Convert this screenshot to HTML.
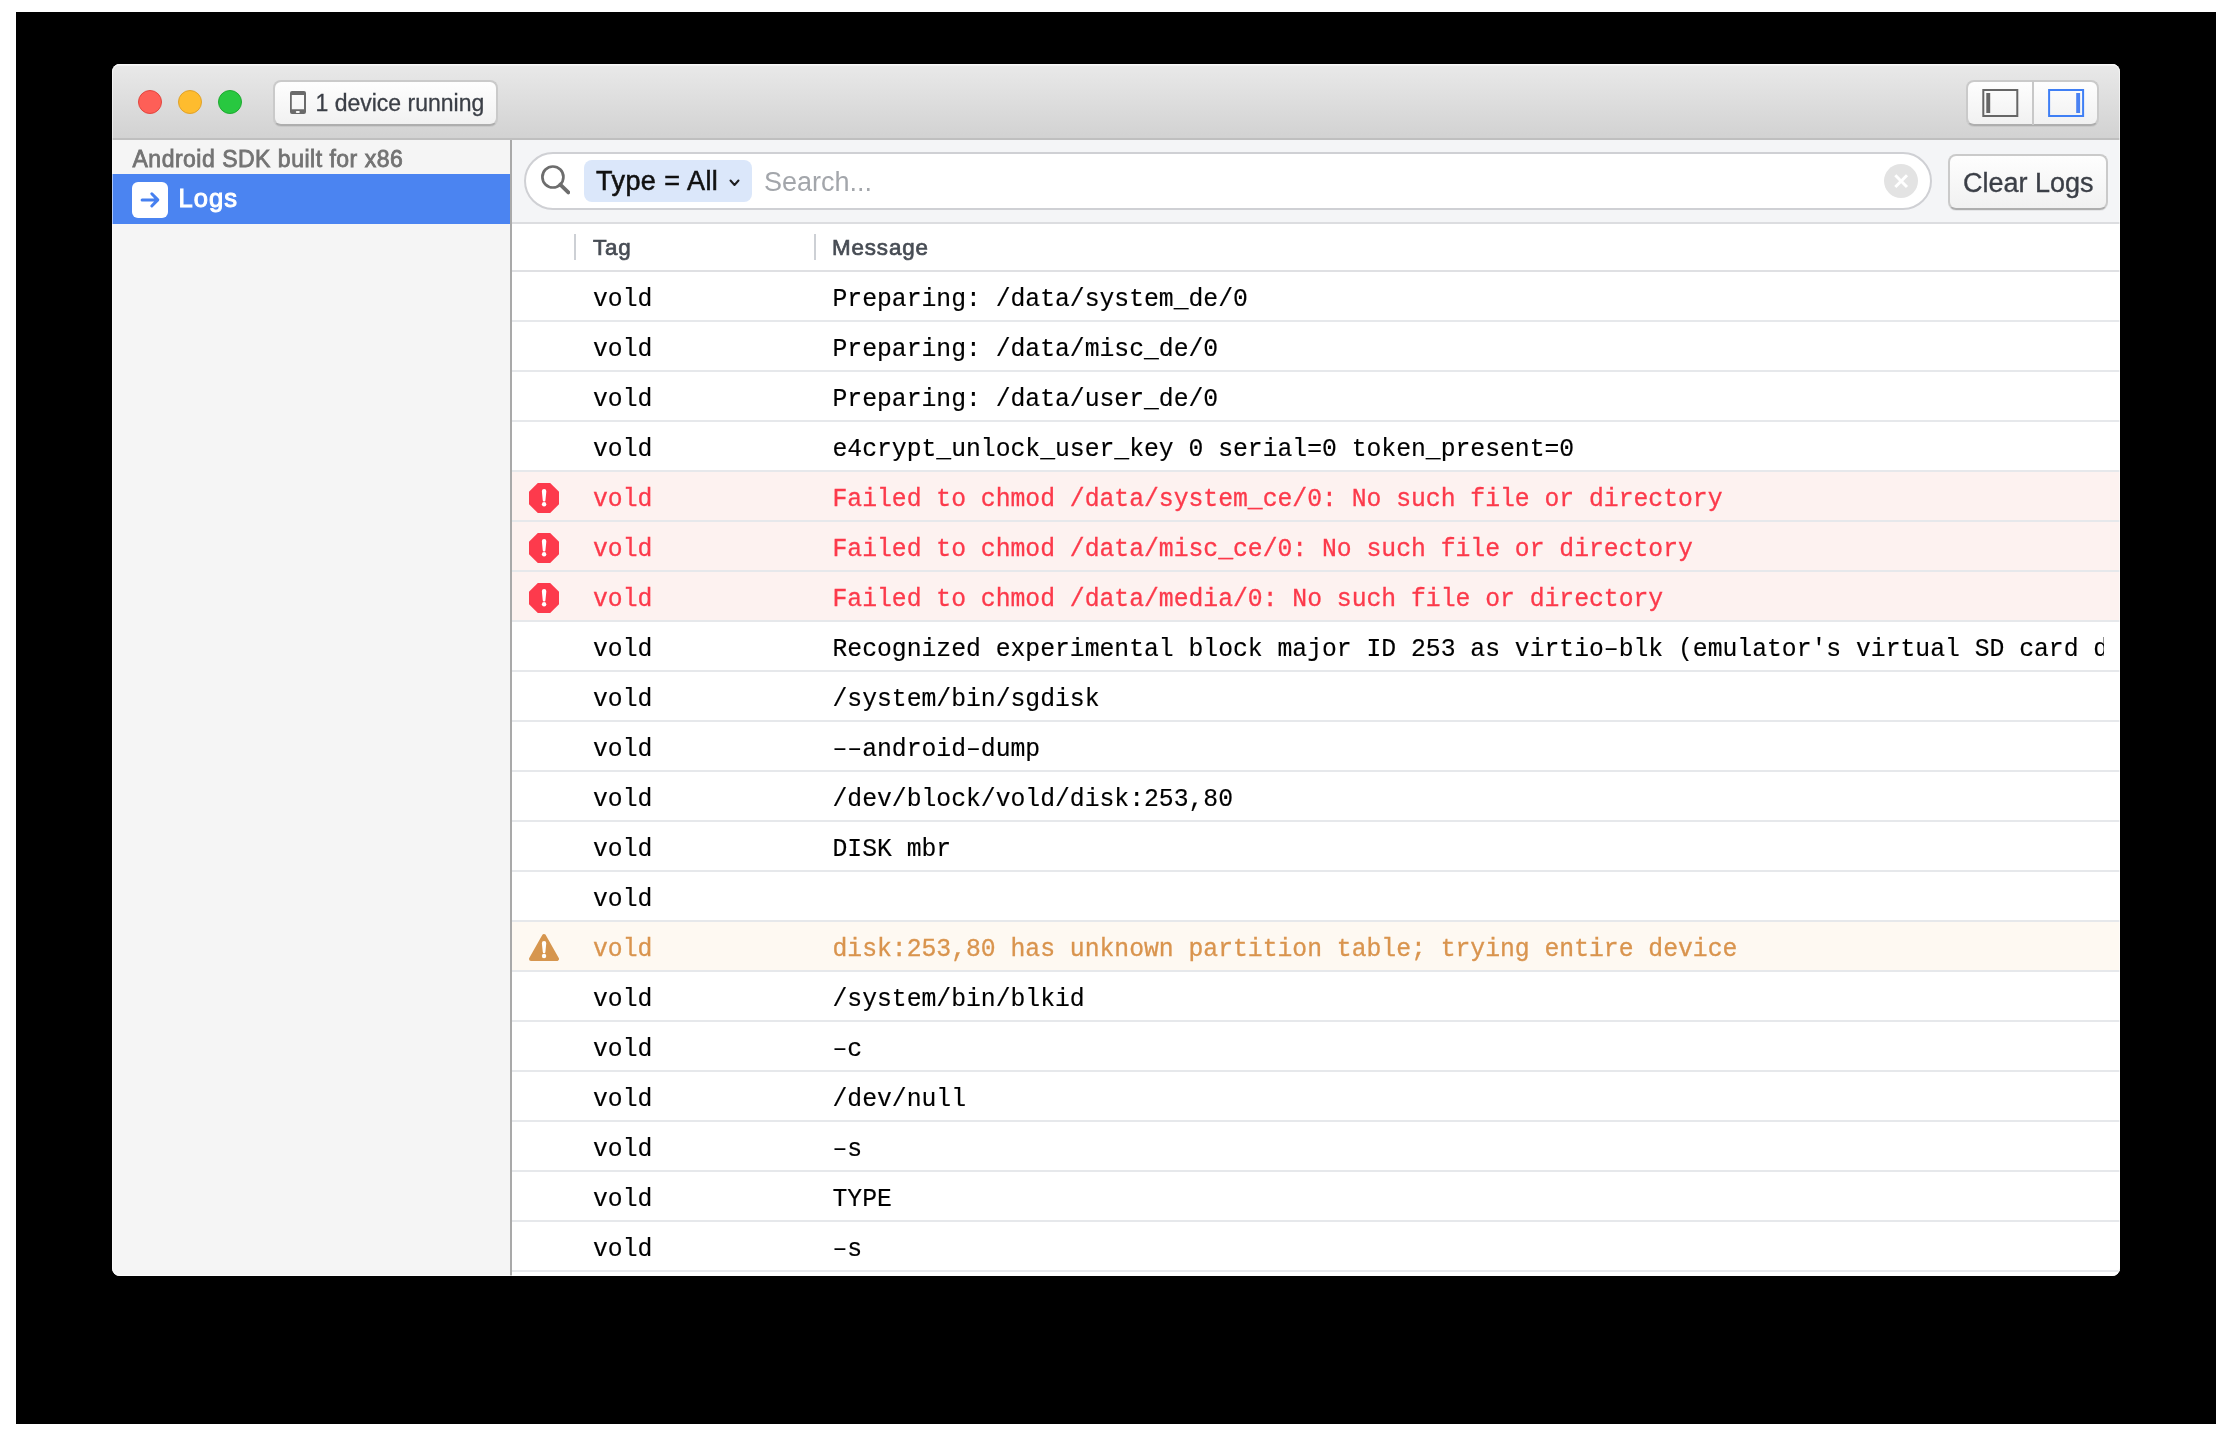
<!DOCTYPE html>
<html><head><meta charset="utf-8">
<style>
*{margin:0;padding:0;box-sizing:border-box}
html,body{width:2232px;height:1436px;background:#fff;overflow:hidden;font-family:"Liberation Sans",sans-serif}
#bg{position:absolute;left:16px;top:12px;width:2200px;height:1412px;background:#000}
#win{will-change:transform;position:absolute;left:112px;top:64px;width:2008px;height:1212px;border-radius:8px;overflow:hidden;background:#f5f5f5}
#title{position:absolute;left:0;top:0;width:2008px;height:76px;background:linear-gradient(#e9e9e9,#d2d2d2);border-bottom:2px solid #bfbfbf;box-shadow:inset 0 2px 0 #f2f2f2}
.tl{position:absolute;top:26px;width:24px;height:24px;border-radius:50%}
#t1{left:26px;background:#fe5f57;border:1px solid #e2463f}
#t2{left:66px;background:#febc2e;border:1px solid #e0a22a}
#t3{left:106px;background:#28c840;border:1px solid #1eaa30}
.btn{position:absolute;background:linear-gradient(#fefefe,#f1f1f1);border:2px solid #cacaca;border-bottom-color:#aeaeae;border-radius:8px;box-shadow:0 1px 0 rgba(0,0,0,0.06)}
#dev{left:161px;top:16px;width:225px;height:46px}
#dev span{position:absolute;left:40.5px;top:8px;font-size:23px;color:#3b3f47;-webkit-text-stroke:0.3px #3b3f47;white-space:nowrap}
#phone{position:absolute;left:15px;top:9px}
#tog{left:1854px;top:16px;width:133px;height:46px}
#tog svg{position:absolute;left:-1px;top:-1px}
#side{position:absolute;left:0;top:76px;width:398px;height:1136px;background:#f5f5f5}
#sdk{position:absolute;left:20.5px;top:5.5px;font-size:23px;letter-spacing:0.5px;-webkit-text-stroke:0.8px #737373;color:#737373;white-space:nowrap}
#logsrow{position:absolute;left:0;top:34px;width:398px;height:50px;background:#4b84f1}
#logsicon{position:absolute;left:20px;top:8px;width:36px;height:36px;border-radius:6px;background:#fff}
#logstxt{position:absolute;left:66.5px;top:9.7px;font-size:25.5px;letter-spacing:1.1px;color:#fff;-webkit-text-stroke:1px #fff;white-space:nowrap}
#logsicon svg{position:absolute;left:0;top:0}
#sdiv{position:absolute;left:398px;top:76px;width:2px;height:1136px;background:#a9a9a9}
#main{position:absolute;left:400px;top:76px;width:1608px;height:1136px;background:#fff;overflow:hidden}
#tool{position:absolute;left:0;top:0;width:1608px;height:84px;background:#f4f5f7;border-bottom:2px solid #dcdde0}
#search{position:absolute;left:12px;top:12px;width:1408px;height:58px;border:2px solid #cfd0d4;border-radius:29px;background:#fff}
#pill{position:absolute;left:58px;top:6px;width:168px;height:42px;border-radius:8px;background:#dbe7fa}
#pill span{position:absolute;left:12px;top:6px;font-size:27px;letter-spacing:0.45px;color:#111;-webkit-text-stroke:0.55px #111;white-space:nowrap}
#chev{position:absolute;left:145px;top:18px}
#ph{position:absolute;left:238px;top:13px;font-size:27px;color:#a3a6ab;white-space:nowrap}
#mag{position:absolute;left:12px;top:9px}
#xbtn{position:absolute;left:1358px;top:10px}
#clear{left:1436px;top:14px;width:160px;height:56px}
#clear span{position:absolute;left:13px;top:12px;font-size:27px;color:#3b3f47;-webkit-text-stroke:0.35px #3b3f47;white-space:nowrap}
#head{position:absolute;left:0;top:84px;width:1608px;height:48px;background:#fff;border-bottom:2px solid #dfe0e3}
.sep{position:absolute;top:10px;width:2px;height:26px;background:#cdd0d5}
.hd{position:absolute;top:11px;font-size:22.4px;letter-spacing:0.85px;-webkit-text-stroke:0.7px #474c54;color:#474c54}
#rows{position:absolute;left:0;top:132px;width:1608px}
.r{position:relative;height:50px;border-bottom:2px solid #e6e8eb;font-family:"Liberation Mono",monospace;font-size:24.73px;color:#000;-webkit-text-stroke:0.15px currentColor;white-space:nowrap}
.r .tg{position:absolute;left:81px;top:13px;transform:scaleY(1.07);transform-origin:0 78%}
.r .ms{position:absolute;left:320.5px;top:13px;width:1271.5px;overflow:hidden;transform:scaleY(1.07);transform-origin:0 78%}
.r.e{background:#fdf2f0;color:#fc3a4b;-webkit-text-stroke:0.3px currentColor}
.r.w{background:#fef9f2;color:#d9944e;-webkit-text-stroke:0.3px currentColor}
#edge{position:absolute;left:0;top:0;width:2008px;height:1212px;border-radius:8px;box-shadow:inset 0 0 0 1px rgba(255,255,255,0.55);pointer-events:none}
.ic{position:absolute;left:17px;top:11px;width:30px;height:30px}
</style></head><body>
<svg width="0" height="0" style="position:absolute"><defs>
<g id="err"><path fill="#fd3a4c" d="M8.8 0H21.2L30 8.8V21.2L21.2 30H8.8L0 21.2V8.8Z"/><path fill="#fff" d="M12.85 8.15a2.25 2.25 0 0 1 4.5 0L16.45 17.2a1.35 1.35 0 0 1-2.7 0Z"/><circle cx="15.1" cy="21.2" r="2.2" fill="#fff"/></g>
<g id="warn"><path fill="#d6964f" stroke="#d6964f" stroke-width="4" stroke-linejoin="round" d="M15 3L28 25.9H2Z"/><path fill="#fff" d="M12.85 10.15a2.2 2.2 0 0 1 4.4 0L16.4 19a1.3 1.3 0 0 1-2.6 0Z"/><circle cx="15.05" cy="23" r="2.2" fill="#fff"/></g>
</defs></svg>
<div id="bg"></div>
<div id="win">
  <div id="title">
    <div class="tl" id="t1"></div><div class="tl" id="t2"></div><div class="tl" id="t3"></div>
    <div class="btn" id="dev"><svg id="phone" width="16" height="23" viewBox="0 0 16 23"><path fill="#6a6a6a" fill-rule="evenodd" d="M2 0h12a2 2 0 0 1 2 2v19a2 2 0 0 1-2 2H2a2 2 0 0 1-2-2V2a2 2 0 0 1 2-2zM1.8 4v14.2h12.2V4zM6.8 20h2a1 1 0 0 1 0 2h-2a1 1 0 0 1 0-2z"/></svg><span>1 device running</span></div>
    <div class="btn" id="tog"><svg width="131" height="44" viewBox="0 0 131 44"><rect x="65" y="0" width="2" height="44" fill="#c8c8c8"/><rect x="16.3" y="9" width="34" height="26" fill="none" stroke="#666" stroke-width="2"/><rect x="19.3" y="12" width="3.9" height="20" fill="#666"/><rect x="82.1" y="9" width="34" height="26" fill="none" stroke="#3f7ff5" stroke-width="2"/><rect x="109.2" y="12" width="3.9" height="20" fill="#4a82f2"/></svg></div>
  </div>
  <div id="side">
    <div id="sdk">Android SDK built for x86</div>
    <div id="logsrow"><div id="logsicon"><svg width="36" height="36" viewBox="0 0 36 36"><path d="M10.1 18H25.2M19.8 11.8L25.8 17.9L19.8 24" fill="none" stroke="#4680f0" stroke-width="3" stroke-linecap="round" stroke-linejoin="round"/></svg></div><div id="logstxt">Logs</div></div>
  </div>
  <div id="sdiv"></div>
  <div id="main">
    <div id="tool">
      <div id="search">
        <svg id="mag" width="32" height="32" viewBox="0 0 32 32"><circle cx="14.9" cy="14" r="10.5" fill="none" stroke="#6d6d6d" stroke-width="2.7"/><path d="M22.3 21.6L30.3 29.4" stroke="#6d6d6d" stroke-width="3.8" stroke-linecap="round"/></svg><div id="pill"><span>Type = All</span><svg id="chev" width="12" height="10" viewBox="0 0 12 10"><path d="M1.5 2.5L5.5 7L9.5 2.5" fill="none" stroke="#1d1d1f" stroke-width="2" stroke-linecap="round" stroke-linejoin="round"/></svg></div>
        <div id="ph">Search...</div><svg id="xbtn" width="36" height="36" viewBox="0 0 36 36"><circle cx="17" cy="17" r="17" fill="#e3e3e3"/><path d="M11.3 11.3L23 23M23 11.3L11.3 23" stroke="#fff" stroke-width="3"/></svg>
      </div>
      <div class="btn" id="clear"><span>Clear Logs</span></div>
    </div>
    <div id="head">
      <div class="sep" style="left:62px"></div>
      <div class="hd" style="left:81px">Tag</div>
      <div class="sep" style="left:302px"></div>
      <div class="hd" style="left:320px">Message</div>
    </div>
    <div id="rows">
<div class="r"><div class="tg">vold</div><div class="ms">Preparing: /data/system_de/0</div></div>
<div class="r"><div class="tg">vold</div><div class="ms">Preparing: /data/misc_de/0</div></div>
<div class="r"><div class="tg">vold</div><div class="ms">Preparing: /data/user_de/0</div></div>
<div class="r"><div class="tg">vold</div><div class="ms">e4crypt_unlock_user_key 0 serial=0 token_present=0</div></div>
<div class="r e"><svg class="ic" viewBox="0 0 30 30"><use href="#err"/></svg><div class="tg">vold</div><div class="ms">Failed to chmod /data/system_ce/0: No such file or directory</div></div>
<div class="r e"><svg class="ic" viewBox="0 0 30 30"><use href="#err"/></svg><div class="tg">vold</div><div class="ms">Failed to chmod /data/misc_ce/0: No such file or directory</div></div>
<div class="r e"><svg class="ic" viewBox="0 0 30 30"><use href="#err"/></svg><div class="tg">vold</div><div class="ms">Failed to chmod /data/media/0: No such file or directory</div></div>
<div class="r"><div class="tg">vold</div><div class="ms">Recognized experimental block major ID 253 as virtio&#x2013;blk (emulator&#x27;s virtual SD card device)</div></div>
<div class="r"><div class="tg">vold</div><div class="ms">/system/bin/sgdisk</div></div>
<div class="r"><div class="tg">vold</div><div class="ms">&#x2013;&#x2013;android&#x2013;dump</div></div>
<div class="r"><div class="tg">vold</div><div class="ms">/dev/block/vold/disk:253,80</div></div>
<div class="r"><div class="tg">vold</div><div class="ms">DISK mbr</div></div>
<div class="r"><div class="tg">vold</div><div class="ms"></div></div>
<div class="r w"><svg class="ic" viewBox="0 0 30 30"><use href="#warn"/></svg><div class="tg">vold</div><div class="ms">disk:253,80 has unknown partition table; trying entire device</div></div>
<div class="r"><div class="tg">vold</div><div class="ms">/system/bin/blkid</div></div>
<div class="r"><div class="tg">vold</div><div class="ms">&#x2013;c</div></div>
<div class="r"><div class="tg">vold</div><div class="ms">/dev/null</div></div>
<div class="r"><div class="tg">vold</div><div class="ms">&#x2013;s</div></div>
<div class="r"><div class="tg">vold</div><div class="ms">TYPE</div></div>
<div class="r"><div class="tg">vold</div><div class="ms">&#x2013;s</div></div>
    </div>
  </div>
<div id="edge"></div>
</div>
</body></html>
